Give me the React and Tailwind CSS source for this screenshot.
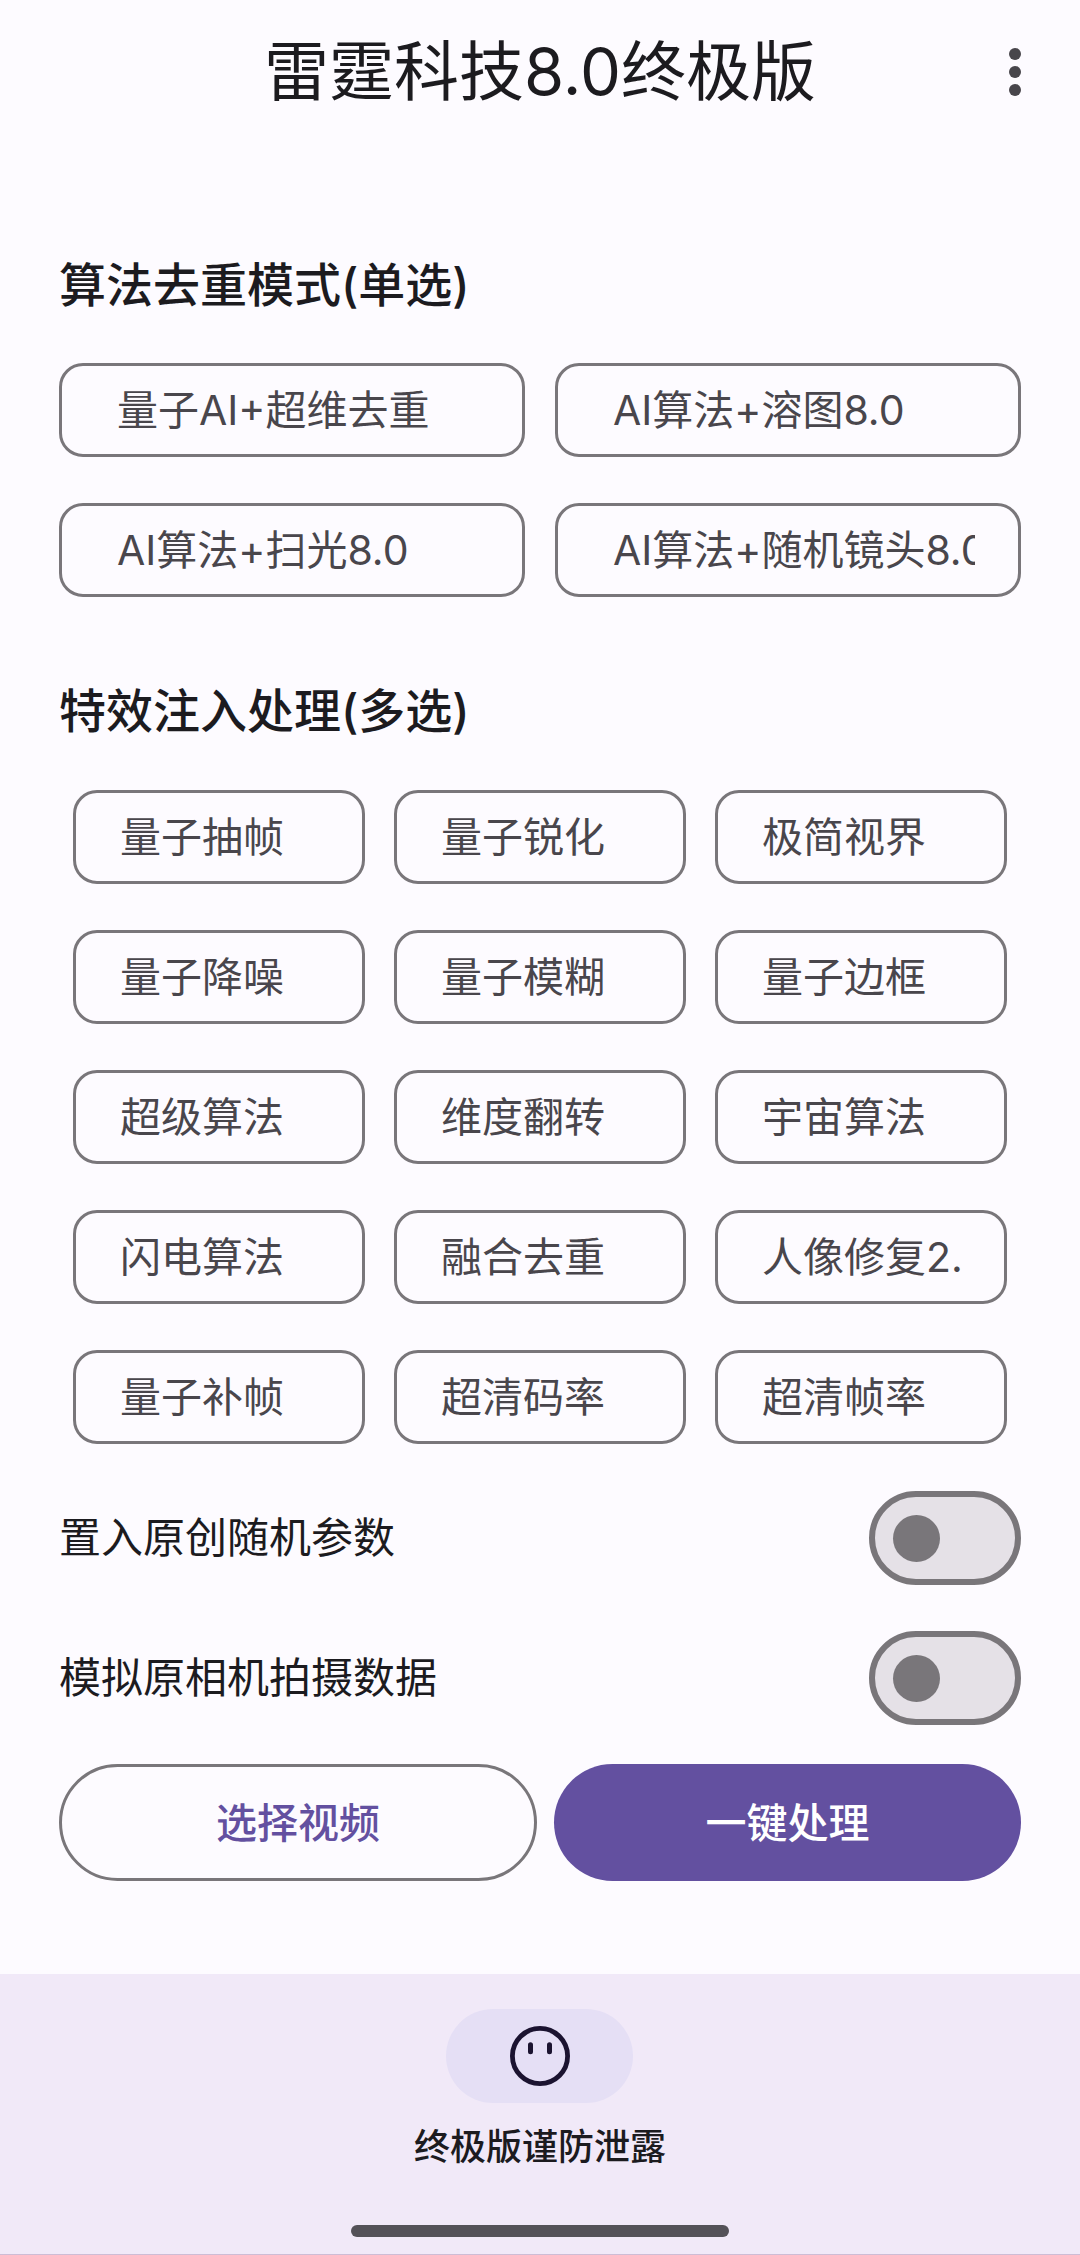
import React, { useState } from "react";

const MODES = ["量子AI+超维去重", "AI算法+溶图8.0", "AI算法+扫光8.0", "AI算法+随机镜头8.0"];

const EFFECTS = [
  "量子抽帧", "量子锐化", "极简视界",
  "量子降噪", "量子模糊", "量子边框",
  "超级算法", "维度翻转", "宇宙算法",
  "闪电算法", "融合去重", "人像修复2.0",
  "量子补帧", "超清码率", "超清帧率",
];

const SWITCHES = [
  { id: "random-params", label: "置入原创随机参数" },
  { id: "camera-data", label: "模拟原相机拍摄数据" },
];

function Chip({ type, name, label, checked, onChange, className }) {
  return (
    <label
      className={`relative flex h-[94px] min-w-0 cursor-pointer items-center rounded-[24px] border-3 border-[#79767a] text-[41px] leading-[64px] text-[#49464c] has-checked:bg-[#e5dff5] ${className}`}
    >
      <input type={type} name={name} checked={checked} onChange={onChange} className="sr-only" />
      <span className="min-w-0 flex-1 overflow-x-clip whitespace-nowrap">{label}</span>
    </label>
  );
}

function SwitchRow({ id, label, checked, onChange }) {
  return (
    <div className="flex items-center justify-between">
      <label htmlFor={id} className="text-[42px] leading-[64px]">{label}</label>
      <input
        id={id}
        type="checkbox"
        role="switch"
        checked={checked}
        onChange={onChange}
        className="flex h-[94px] w-[152px] shrink-0 cursor-pointer appearance-none items-center rounded-full border-6 border-[#79767a] bg-[#e5e1e7] px-[18px] before:size-[47px] before:rounded-full before:bg-[#79767a] before:content-[''] checked:justify-end checked:border-[#6350a0] checked:bg-[#6350a0] checked:before:bg-white"
      />
    </div>
  );
}

export default function App() {
  const [mode, setMode] = useState(null);
  const [effects, setEffects] = useState([]);
  const [enabled, setEnabled] = useState({});

  const toggleEffect = (name) =>
    setEffects((prev) => (prev.includes(name) ? prev.filter((n) => n !== name) : [...prev, name]));

  return (
    <div className="flex min-h-screen flex-col bg-[#fdfbff] font-['Inter','Noto_Sans_CJK_SC',sans-serif] text-[#1c1b1f]">
      <header className="grid h-[144px] grid-cols-[1fr_auto_1fr] items-center px-[41px]">
        <h1 className="col-start-2 text-[65px] leading-[80px]">雷霆科技8.0终极版</h1>
        <button type="button" aria-label="更多" className="justify-self-end text-[#48464b]">
          <svg viewBox="0 0 48 48" className="size-[48px]" fill="currentColor">
            <circle cx="24" cy="6" r="6" />
            <circle cx="24" cy="24" r="6" />
            <circle cx="24" cy="42" r="6" />
          </svg>
        </button>
      </header>

      <main className="px-[59px] pt-[112px] pb-[93px]">
        <h2 className="mb-[49px] text-[47px] leading-[58px] font-medium">算法去重模式(单选)</h2>
        <div className="grid grid-cols-2 gap-x-[30px] gap-y-[46px]">
          {MODES.map((name) => (
            <Chip
              key={name}
              type="radio"
              name="mode"
              label={name}
              checked={mode === name}
              onChange={() => setMode(name)}
              className="pr-[43px] pl-[55px]"
            />
          ))}
        </div>

        <h2 className="mt-[85px] mb-[50px] text-[47px] leading-[58px] font-medium">特效注入处理(多选)</h2>
        <div className="grid grid-cols-3 gap-x-[29px] gap-y-[46px] px-[14px]">
          {EFFECTS.map((name) => (
            <Chip
              key={name}
              type="checkbox"
              name="effects"
              label={name}
              checked={effects.includes(name)}
              onChange={() => toggleEffect(name)}
              className="pr-[41px] pl-[44px]"
            />
          ))}
        </div>

        <div className="mt-[47px] flex flex-col gap-[46px]">
          {SWITCHES.map(({ id, label }) => (
            <SwitchRow
              key={id}
              id={id}
              label={label}
              checked={!!enabled[id]}
              onChange={(e) => setEnabled({ ...enabled, [id]: e.target.checked })}
            />
          ))}
        </div>

        <div className="mt-[39px] grid grid-cols-[478fr_467fr] gap-[17px] text-[41px] leading-[64px] font-medium">
          <button type="button" className="h-[117px] rounded-full border-3 border-[#79767a] text-[#6350a0]">
            选择视频
          </button>
          <button type="button" className="h-[117px] rounded-full bg-[#6350a0] text-white">
            一键处理
          </button>
        </div>
      </main>

      <nav className="mt-auto flex flex-col items-center border-b border-[#cdbdd6] bg-[#f1e9f8] pt-[35px] pb-[17px]">
        <a href="#home" className="flex flex-col items-center gap-[20px]">
          <span className="flex h-[94px] w-[187px] items-center justify-center rounded-full bg-[#e5dff5]">
            <svg viewBox="0 0 60 60" className="size-[60px]" fill="none" stroke="#1b1330">
              <circle cx="30" cy="30" r="27.6" strokeWidth="4.8" />
              <path d="M20.5 18.8v7M39.5 18.8v7" strokeWidth="5" strokeLinecap="round" />
            </svg>
          </span>
          <span className="text-[36px] leading-[48px] font-medium">终极版谨防泄露</span>
        </a>
        <div className="mt-[54px] h-[12px] w-[378px] rounded-full bg-[#545158]" />
      </nav>
    </div>
  );
}
